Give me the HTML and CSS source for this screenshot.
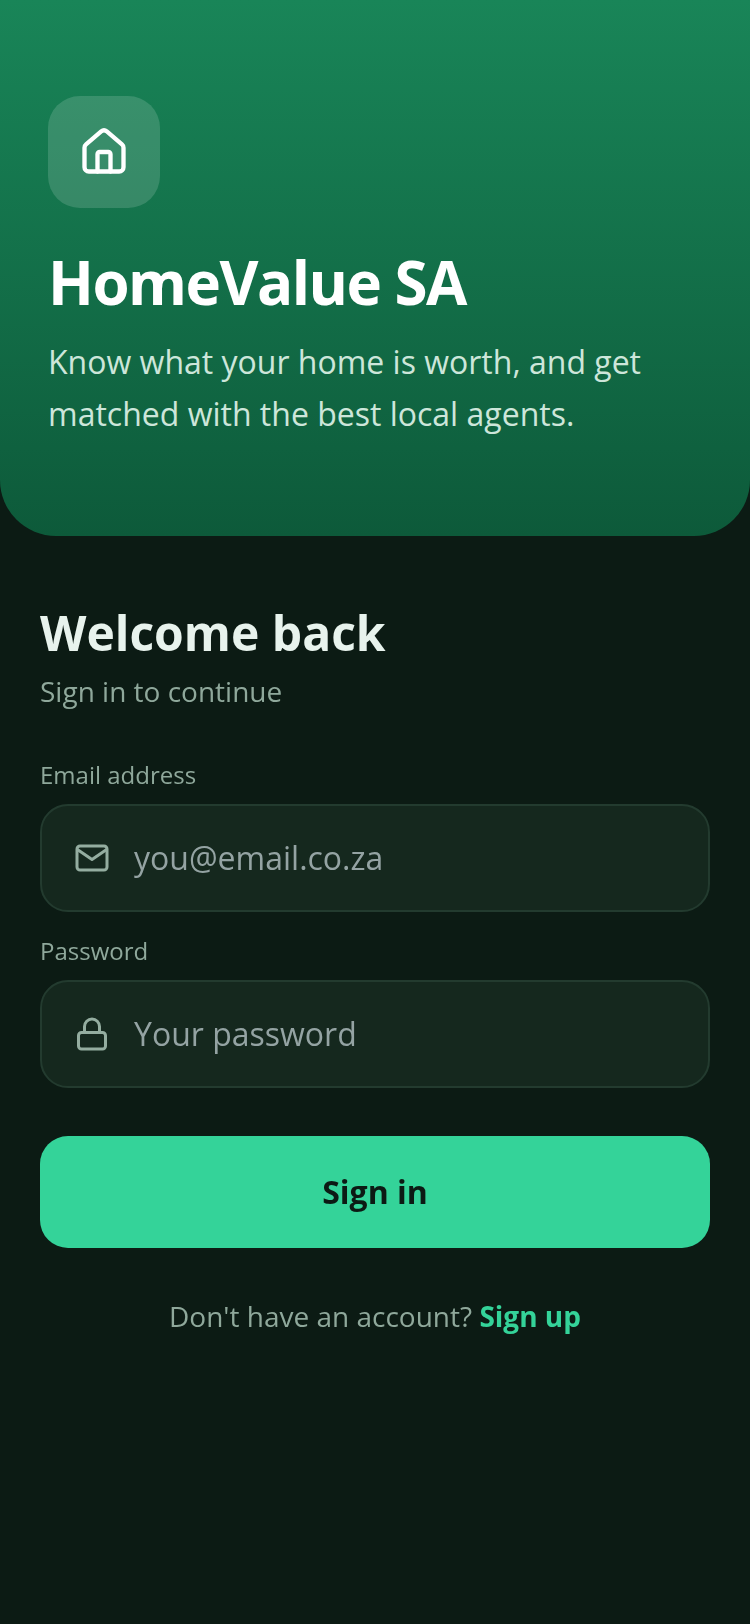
FILE: index.html
```html
<!DOCTYPE html>
<html lang="en">

<head>
    <meta charset="UTF-8">
    <meta name="viewport" content="width=device-width, initial-scale=1.0">
    <title>HomeValue SA</title>
    <link rel="stylesheet" href="styles.css">
</head>

<body>
    <header class="hero">
        <div class="logo">
            <svg width="52" height="52" viewBox="0 0 24 24" fill="none" stroke="#fff" stroke-width="2" stroke-linecap="round" stroke-linejoin="round">
                <path d="M15 21v-8a1 1 0 0 0-1-1h-4a1 1 0 0 0-1 1v8"/>
                <path d="M3 10a2 2 0 0 1 .709-1.528l7-5.999a2 2 0 0 1 2.582 0l7 5.999A2 2 0 0 1 21 10v9a2 2 0 0 1-2 2H5a2 2 0 0 1-2-2z"/>
            </svg>
        </div>
        <h1 class="brand">HomeValue SA</h1>
        <p class="tagline">Know what your home is worth, and get matched with the best local agents.</p>
    </header>

    <main class="content">
        <h2 class="title">Welcome back</h2>
        <p class="subtitle">Sign in to continue</p>

        <form class="login">
            <label class="field-label" for="email">Email address</label>
            <div class="field">
                <svg width="36" height="36" viewBox="0 0 24 24" fill="none" stroke="#94ada0" stroke-width="2" stroke-linecap="round" stroke-linejoin="round">
                    <rect x="2" y="4" width="20" height="16" rx="2"/>
                    <path d="m2.5 6.5 9.5 6.5 9.5-6.5"/>
                </svg>
                <input type="text" id="email" placeholder="you@email.co.za">
            </div>

            <label class="field-label" for="password">Password</label>
            <div class="field">
                <svg width="36" height="36" viewBox="0 0 24 24" fill="none" stroke="#94ada0" stroke-width="2" stroke-linecap="round" stroke-linejoin="round">
                    <rect x="3" y="11" width="18" height="11" rx="2"/>
                    <path d="M7 11V7a5 5 0 0 1 10 0v4"/>
                </svg>
                <input type="password" id="password" placeholder="Your password">
            </div>

            <button type="submit" class="submit">Sign in</button>
        </form>

        <p class="signup">Don't have an account? <a href="#">Sign up</a></p>
    </main>
</body>

</html>
```

FILE: styles.css
```css
* {
    box-sizing: border-box;
}

body {
    margin: 0;
    min-height: 1624px;
    background-color: #0c1b14;
    font-family: "Open Sans", sans-serif;
}

.hero {
    height: 536px;
    padding: 96px 48px 0;
    background: linear-gradient(180deg, #198558, #0d5a3a);
    border-radius: 0 0 56px 56px;
    will-change: opacity;
}

.logo {
    display: flex;
    justify-content: center;
    align-items: center;
    width: 112px;
    height: 112px;
    border-radius: 32px;
    background: rgba(255, 255, 255, 0.15);
}

.brand {
    margin: 32px 0 0;
    font-size: 60px;
    line-height: 84px;
    font-weight: 700;
    letter-spacing: -1.5px;
    color: #fff;
}

.tagline {
    margin: 12px 0 0;
    font-size: 32px;
    line-height: 52px;
    color: #cde6da;
}

.content {
    padding: 64px 40px 0;
    will-change: opacity;
}

.title {
    margin: 0;
    font-size: 48px;
    line-height: 66px;
    font-weight: 700;
    color: #e8f3ed;
}

.subtitle {
    margin: 3px 0 0;
    font-size: 28px;
    line-height: 44px;
    color: #8fa89b;
}

.login {
    margin-top: 45px;
}

.field-label {
    display: block;
    margin-bottom: 12px;
    font-size: 24px;
    line-height: 34px;
    color: #8fa89b;
}

.field {
    display: flex;
    align-items: center;
    gap: 22px;
    height: 108px;
    margin-bottom: 22px;
    padding: 0 32px;
    background: #15281e;
    border: 2px solid #233b2f;
    border-radius: 28px;
}

.field input {
    flex: 1;
    min-width: 0;
    margin-bottom: 2px;
    border: 0;
    outline: 0;
    background: transparent;
    font-family: inherit;
    font-size: 32px;
    color: #e8f3ed;
}

.field input::placeholder {
    color: #94a3a3;
    opacity: 1;
}

.submit {
    display: block;
    width: 100%;
    height: 112px;
    margin-top: 48px;
    padding: 0 0 2px;
    border: 0;
    border-radius: 28px;
    background: #34d399;
    font-family: inherit;
    font-size: 32px;
    font-weight: 700;
    color: #0c1a14;
}

.signup {
    margin: 48px 0 0;
    text-align: center;
    font-size: 28px;
    line-height: 40px;
    color: #8fa89b;
}

.signup a {
    font-weight: 700;
    color: #34d399;
    text-decoration: none;
}
```
